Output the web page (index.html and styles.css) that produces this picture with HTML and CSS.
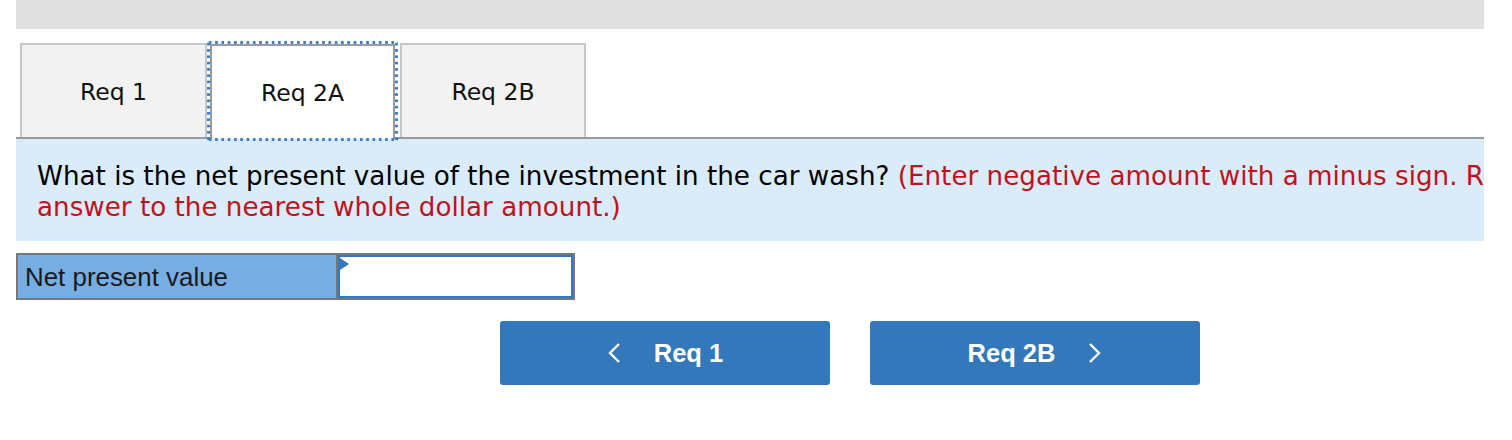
FILE: index.html
```html
<!DOCTYPE html>
<html>
<head>
<meta charset="utf-8">
<link rel="stylesheet" href="styles.css">
</head>
<body>
<div class="page">
  <div class="topbar"></div>
  <div class="tabs">
    <div class="tab">Req 1</div>
    <div class="tab active">Req 2A</div>
    <div class="tab last">Req 2B</div>
  </div>
  <div class="question">
    <p>What is the net present value of the investment in the car wash? <span class="red">(Enter negative amount with a minus sign. Round your final<br>answer to the nearest whole dollar amount.)</span></p>
  </div>
  <div class="answer">
    <div class="label">Net present value</div>
    <div class="field"><span class="marker"></span></div>
  </div>
  <div class="nav">
    <button class="btn"><svg class="chev" width="14" height="22" viewBox="0 0 14 22"><path d="M12 2 L3 11 L12 20" fill="none" stroke="#fff" stroke-width="2.4"/></svg><span>Req 1</span></button>
    <button class="btn"><span>Req 2B</span><svg class="chev" width="14" height="22" viewBox="0 0 14 22"><path d="M2 2 L11 11 L2 20" fill="none" stroke="#fff" stroke-width="2.4"/></svg></button>
  </div>
</div>
</body>
</html>
```
FILE: styles.css
```css
html, body {
  margin: 0;
  padding: 0;
  background: #fff;
}
.page {
  margin-left: 16px;
  width: 1468px;
  overflow: hidden;
}
.topbar {
  height: 29px;
  background: #e0e0e0;
}
.tabs {
  display: flex;
  align-items: flex-start;
  margin-top: 14px;
  padding-left: 4px;
  height: 94px;
  border-bottom: 2px solid #9a9a9a;
  font-family: "DejaVu Sans", Verdana, sans-serif;
  font-size: 23.5px;
  color: #111;
}
.tab {
  box-sizing: border-box;
  width: 187px;
  height: 94px;
  background: #f2f2f2;
  border: 2px solid #c6c6c6;
  border-bottom: none;
  display: flex;
  align-items: center;
  justify-content: center;
  padding-top: 2px;
}
.tab.active {
  position: relative;
  z-index: 2;
  margin-left: 3px;
  margin-top: 1px;
  width: 185px;
  height: 95px;
  padding-top: 0;
  background: #fff;
  border-color: #9a9a9a;
}
.tab.active::after {
  content: "";
  position: absolute;
  top: -5px;
  left: -5px;
  right: -5px;
  bottom: -2px;
  background:
    radial-gradient(circle, #3a7dc6 1.3px, transparent 1.8px) left top / 6.3px 3px repeat-x,
    radial-gradient(circle, #3a7dc6 1.3px, transparent 1.8px) left bottom / 6.3px 3px repeat-x,
    radial-gradient(circle, #3a7dc6 1.3px, transparent 1.8px) left top / 3px 6.3px repeat-y,
    radial-gradient(circle, #3a7dc6 1.3px, transparent 1.8px) right top / 3px 6.3px repeat-y;
  pointer-events: none;
}
.tab.last {
  margin-left: 5px;
  width: 186px;
}
.question {
  height: 102px;
  box-sizing: border-box;
  background: #daebf9;
  padding: 22px 0 0 21px;
  font-family: "DejaVu Sans", Verdana, sans-serif;
  font-size: 26.2px;
  line-height: 31px;
  color: #000;
  white-space: nowrap;
}
.question p {
  margin: 0;
}
.red {
  color: #c0121a;
}
.answer {
  display: flex;
  margin-top: 12px;
  width: 559px;
  height: 47px;
  box-sizing: border-box;
  border: 2px solid #777;
}
.label {
  box-sizing: border-box;
  width: 320px;
  background: #76ade3;
  border-right: 2px solid #777;
  padding-left: 7px;
  padding-top: 1px;
  display: flex;
  align-items: center;
  font-family: "Liberation Sans", Arial, sans-serif;
  font-size: 25.9px;
  color: #1a1a1a;
}
.field {
  position: relative;
  flex: 1;
  border: 2px solid #3478bd;
  background: #fff;
}
.marker {
  position: absolute;
  left: 0;
  top: 1px;
  width: 0;
  height: 0;
  border-left: 9px solid #3478bd;
  border-top: 6px solid transparent;
  border-bottom: 6px solid transparent;
}
.nav {
  display: flex;
  gap: 40px;
  margin-top: 21px;
  margin-left: 484px;
}
.btn {
  width: 330px;
  height: 64px;
  border: none;
  border-radius: 3px;
  background: #3278bb;
  color: #fff;
  font-family: "Liberation Sans", Arial, sans-serif;
  font-weight: bold;
  font-size: 25.5px;
  display: flex;
  align-items: center;
  justify-content: center;
  gap: 33px;
  padding: 0;
}
.chev {
  display: block;
}
```
